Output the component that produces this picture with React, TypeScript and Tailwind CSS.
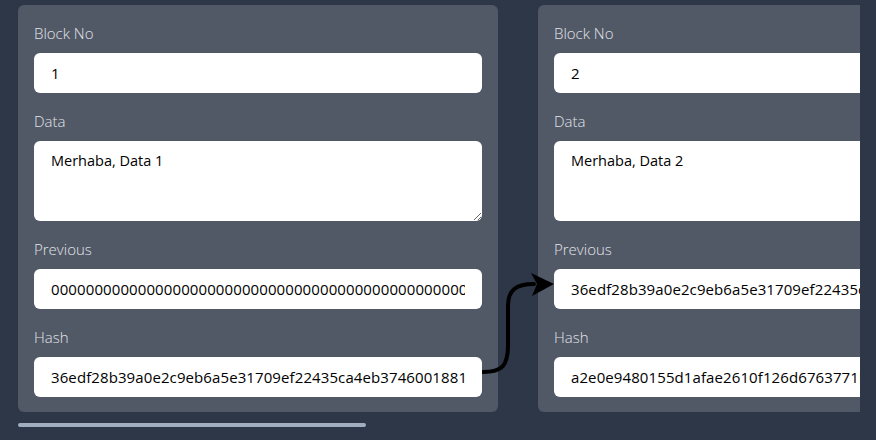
import React from "react";

type Block = {
  no: number;
  data: string;
  previous: string;
  hash: string;
};

const blocks: Block[] = [
  {
    no: 1,
    data: "Merhaba, Data 1",
    previous: "0000000000000000000000000000000000000000000000000000000000000000",
    hash: "36edf28b39a0e2c9eb6a5e31709ef22435ca4eb3746001881c2f5a9d04e7b3a1",
  },
  {
    no: 2,
    data: "Merhaba, Data 2",
    previous: "36edf28b39a0e2c9eb6a5e31709ef22435ca4eb3746001881c2f5a9d04e7b3a1",
    hash: "a2e0e9480155d1afae2610f126d6763771b0c4e8f2d93a5e61c7084b2f9d3e50",
  },
  {
    no: 3,
    data: "Merhaba, Data 3",
    previous: "a2e0e9480155d1afae2610f126d6763771b0c4e8f2d93a5e61c7084b2f9d3e50",
    hash: "7f3c1b9e04a62d58c0e1f7a93b4d6e20158ac9f7e3d2b0a4c61e8f5d7a9b2c04",
  },
  {
    no: 4,
    data: "Merhaba, Data 4",
    previous: "7f3c1b9e04a62d58c0e1f7a93b4d6e20158ac9f7e3d2b0a4c61e8f5d7a9b2c04",
    hash: "c91d04e7b2a5f3860d1e9c7a4b2f50e83d6a1c9f0b7e24d5a8c3f1e6b09d7a42",
  },
];

const font = { fontFamily: '"Open Sans", "Noto Sans", sans-serif' };

const Label = ({ children }: { children: React.ReactNode }) => (
  <label className="block h-6 mb-2 text-[15px] leading-6 font-light text-[#e2e5ea]">
    {children}
  </label>
);

const inputCls =
  "block w-full h-10 rounded-md bg-white px-[17px] text-[15px] text-black outline-none";

function BlockCard({ block }: { block: Block }) {
  return (
    <div className="w-[480px] shrink-0 rounded-md bg-[#515866] px-4 pt-4 pb-[15px]">
      <Label>Block No</Label>
      <input className={inputCls} defaultValue={block.no} readOnly />
      <div className="mt-4">
        <Label>Data</Label>
        <textarea
          className="block w-full h-20 rounded-md bg-white px-[17px] py-[9px] text-[14.5px] leading-[22px] text-black outline-none"
          defaultValue={block.data}
        />
      </div>
      <div className="mt-4">
        <Label>Previous</Label>
        <input className={`${inputCls} tracking-[0.1px]`} defaultValue={block.previous} readOnly />
      </div>
      <div className="mt-4">
        <Label>Hash</Label>
        <input className={`${inputCls} tracking-[0.1px]`} defaultValue={block.hash} readOnly />
      </div>
    </div>
  );
}

// link from one card's hash to the next card's previous
const Arrow = ({ left }: { left: number }) => (
  <svg
    className="absolute top-0 pointer-events-none"
    style={{ left }}
    width="80"
    height="420"
    viewBox="0 0 80 420"
  >
    <path
      d="M1 372 C20 372 26 366 26 345 L26 306 C26 290 34 284 52 284"
      fill="none"
      stroke="#000"
      strokeWidth="4"
      strokeLinecap="round"
    />
    <path d="M49 273 L72 284 L50 296 L55 284 Z" fill="#000" />
  </svg>
);

export default function App() {
  return (
    <div className="min-h-[440px] w-full bg-[#2d3748]" style={font}>
      <div className="ml-[18px] mr-[16px] overflow-hidden pb-[11px]">
        <div className="relative flex w-max gap-10 pt-[5px]">
          {blocks.map((b) => (
            <BlockCard key={b.no} block={b} />
          ))}
          {blocks.slice(0, -1).map((b, i) => (
            <Arrow key={b.no} left={464 + i * 520} />
          ))}
        </div>
      </div>
      {/* scroll thumb */}
      <div className="ml-[18px] h-1 w-[348px] rounded-full bg-[#a0aec0]" />
    </div>
  );
}
